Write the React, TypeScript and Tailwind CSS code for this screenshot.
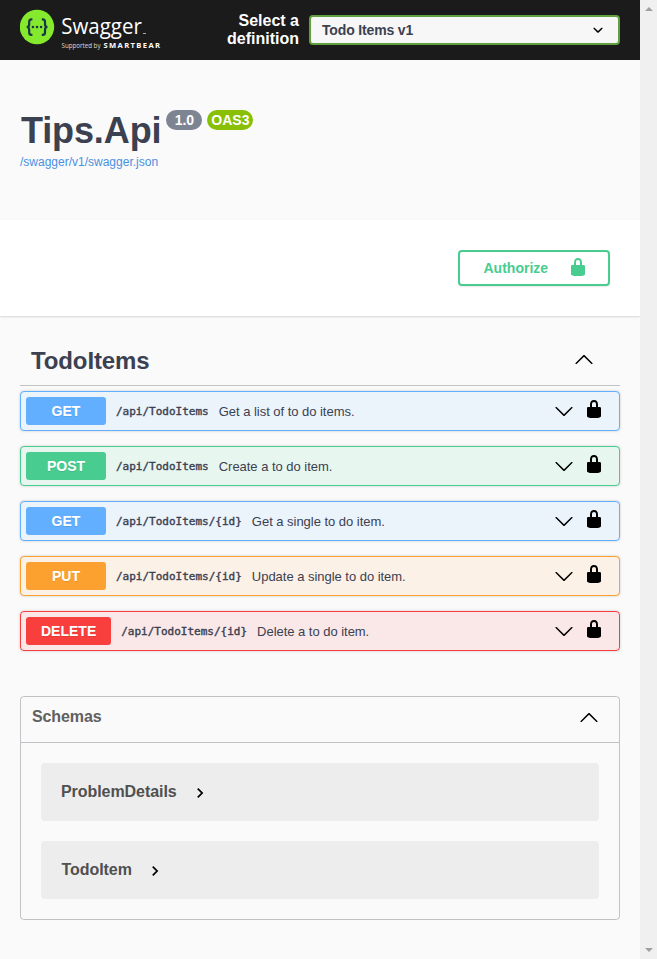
import React from "react";

const LOCK =
  "M15.8 8H14V5.6C14 2.703 12.665 1 10 1 7.334 1 6 2.703 6 5.6V8H4c-.553 0-1 .646-1 1.199V17c0 .549.428 1.139.951 1.307l1.197.387C5.672 18.861 6.55 19 7.1 19h5.8c.549 0 1.428-.139 1.951-.307l1.196-.387c.524-.167.953-.757.953-1.306V9.199C17 8.646 16.352 8 15.8 8zM12 8H8V5.199C8 3.754 8.797 3 10 3c1.203 0 2 .754 2 2.199V8z";
const DOWN =
  "M17.418 6.109c.272-.268.709-.268.979 0s.271.701 0 .969l-7.908 7.83c-.27.268-.707.268-.979 0l-7.908-7.83c-.27-.268-.27-.701 0-.969.271-.268.709-.268.979 0L10 13.25l7.418-7.141z";
const UP =
  "M17.418 14.908c.272.268.709.268.979 0s.271-.701 0-.969l-7.908-7.83c-.27-.268-.707-.268-.979 0l-7.908 7.83c-.27.268-.27.701 0 .969.271.268.709.268.979 0L10 7.767l7.418 7.141z";
const SELECT =
  "M13.418 7.859c.271-.268.709-.268.978 0 .27.268.272.701 0 .969l-3.908 3.83c-.27.268-.707.268-.979 0l-3.908-3.83c-.27-.267-.27-.701 0-.969.271-.268.709-.268.978 0L10 11l3.418-3.141z";

function Icon({ d, className = "" }: { d: string; className?: string }) {
  return (
    <svg viewBox="0 0 20 20" className={`h-5 w-5 shrink-0 fill-current ${className}`}>
      <path d={d} />
    </svg>
  );
}

function Logo() {
  return (
    <svg viewBox="0 0 150 60" className="h-[60px] w-[150px] shrink-0">
      <circle cx="17" cy="27" r="17.2" fill="#85ea2d" />
      <g fill="none" stroke="#173647" strokeWidth="2.2">
        <path d="M12.4 19.4h-.9c-1.7 0-2.3.9-2.3 2.4v2.4c0 1.7-.8 2.8-2.5 2.8 1.7 0 2.5 1.1 2.5 2.8v2.6c0 1.5.6 2.4 2.3 2.4h.9" />
        <path d="M21.8 19.4h.9c1.7 0 2.3.9 2.3 2.4v2.4c0 1.7.8 2.8 2.5 2.8-1.7 0-2.5 1.1-2.5 2.8v2.6c0 1.5-.6 2.4-2.3 2.4h-.9" />
      </g>
      <g fill="#173647">
        <circle cx="12.9" cy="27" r="1.3" />
        <circle cx="17" cy="27" r="1.3" />
        <circle cx="21.1" cy="27" r="1.3" />
      </g>
      <text x="41.3" y="34.3" textLength="80.5" lengthAdjust="spacingAndGlyphs" fill="#fff" fontSize="22.5" className="font-['Open_Sans',sans-serif]">
        Swagger
      </text>
      <path d="M123 33.5h3" stroke="#aaa" strokeWidth="1" />
      <text x="41.5" y="48" textLength="39" lengthAdjust="spacingAndGlyphs" fill="#ddd" fontSize="7" className="font-['Open_Sans',sans-serif]">
        Supported by
      </text>
      <text x="83.5" y="48" textLength="56.5" lengthAdjust="spacing" fill="#fff" fontSize="7.6" className="font-['Open_Sans',sans-serif] font-bold">
        SMARTBEAR
      </text>
    </svg>
  );
}

const operations = [
  { method: "GET", path: "/api/TodoItems", summary: "Get a list of to do items.", box: "border-[#61affe] bg-[#ebf3fb]", tag: "bg-[#61affe]" },
  { method: "POST", path: "/api/TodoItems", summary: "Create a to do item.", box: "border-[#49cc90] bg-[#e8f6f0]", tag: "bg-[#49cc90]" },
  { method: "GET", path: "/api/TodoItems/{id}", summary: "Get a single to do item.", box: "border-[#61affe] bg-[#ebf3fb]", tag: "bg-[#61affe]" },
  { method: "PUT", path: "/api/TodoItems/{id}", summary: "Update a single to do item.", box: "border-[#fca130] bg-[#fbf1e6]", tag: "bg-[#fca130]" },
  { method: "DELETE", path: "/api/TodoItems/{id}", summary: "Delete a to do item.", box: "border-[#f93e3e] bg-[#fae7e7]", tag: "bg-[#f93e3e]" },
];

function Model({ name, className }: { name: string; className: string }) {
  return (
    <div className={`flex h-[58px] items-center rounded bg-[#ededed] ${className}`}>
      <span className="text-base font-bold tracking-[-0.06px] text-[#505050]">{name}</span>
      <svg viewBox="0 0 24 24" className="mt-0.5 ml-[13px] h-5 w-5">
        <path d="M10 6L8.59 7.41 13.17 12l-4.58 4.59L10 18l6-6z" />
      </svg>
    </div>
  );
}

export default function App() {
  return (
    <div className="flex h-[959px] w-[657px] overflow-hidden bg-[#fafafa] font-['Liberation_Sans',Arial,sans-serif] text-[#3b4151]">
      <div className="w-[640px] shrink-0">
        <header className="flex h-[60px] items-center bg-[#1b1b1b] px-5">
          <Logo />
          <div className="ml-auto w-[90px] text-right text-base leading-[18px] font-bold text-white">Select a definition</div>
          <div className="ml-2.5 flex h-[30px] w-[311px] items-center rounded border-2 border-[#62a03f] bg-[#f7f7f7] pr-[10px] pl-[11px] text-sm font-bold">
            <span className="tracking-[-0.15px]">Todo Items v1</span>
            <Icon d={SELECT} className="ml-auto text-black" />
          </div>
        </header>

        <section className="h-40 px-5 pt-[50px]">
          <div className="flex items-start">
            <h2 className="pl-px text-[36px] leading-[42px] font-bold tracking-[-0.12px]">Tips.Api</h2>
            <span className="ml-[5px] flex h-5 w-9 items-center justify-center rounded-full bg-[#7d8492] text-sm font-bold text-white">1.0</span>
            <span className="ml-[5px] flex h-5 w-[46px] items-center justify-center rounded-full bg-[#89bf04] text-sm font-bold text-white">OAS3</span>
          </div>
          <a className="block text-xs leading-5 text-[#4990e2]">/swagger/v1/swagger.json</a>
        </section>

        <section className="flex h-24 justify-end bg-white pt-[30px] pr-[30px] shadow-[0_1px_2px_0_rgba(0,0,0,0.15)]">
          <button className="flex h-9 w-[152px] items-center rounded border-2 border-[#49cc90] pl-[23.5px] text-sm font-bold text-[#49cc90] shadow-[0_1px_2px_rgba(0,0,0,0.1)]">
            Authorize
            <Icon d={LOCK} className="-mt-0.5 ml-[19.5px]" />
          </button>
        </section>

        <main className="px-5 pt-5">
          <div className="flex h-[50px] items-center border-b border-[#3b4151]/30 pr-[26px] pl-[11px]">
            <h3 className="text-2xl font-bold tracking-[-0.12px]">TodoItems</h3>
            <Icon d={UP} className="mb-[3px] ml-auto text-black" />
          </div>
          <div className="mt-[5px] flex flex-col gap-[15px]">
            {operations.map((op, i) => (
              <div key={i} className={`flex h-10 items-center rounded border pr-[15px] pl-[5px] shadow-[0_0_3px_rgba(0,0,0,0.19)] ${op.box}`}>
                <span className={`flex h-7 min-w-20 items-center justify-center rounded-[3px] px-[15px] text-sm font-bold text-white [text-shadow:0_1px_0_rgba(0,0,0,0.1)] ${op.tag}`}>{op.method}</span>
                <code className="mt-0.5 ml-2.5 font-['DejaVu_Sans_Mono',monospace] text-[11px] font-normal [-webkit-text-stroke:0.4px]">{op.path}</code>
                <span className="mt-px ml-2.5 text-[13px] tracking-[-0.03px]">{op.summary}</span>
                <Icon d={DOWN} className="ml-auto text-black" />
                <Icon d={LOCK} className="mb-1 ml-2.5 text-black" />
              </div>
            ))}
          </div>

          <section className="mt-[45px] h-56 rounded border border-[#3b4151]/30">
            <div className="flex h-[46px] items-center border-b border-[#3b4151]/30 pr-5 pl-[11px]">
              <h4 className="pb-[5px] text-base font-bold tracking-[-0.1px] text-[#606060]">Schemas</h4>
              <Icon d={UP} className="mb-[5px] ml-auto text-black" />
            </div>
            <div className="flex flex-col gap-5 px-5 pt-5">
              <Model name="ProblemDetails" className="pl-5" />
              <Model name="TodoItem" className="pl-[20.5px]" />
            </div>
          </section>
        </main>
      </div>

      <div className="flex w-[17px] flex-col items-center justify-between bg-[#f0f0f0] pt-[7px] pb-[7px]">
        <svg viewBox="0 0 8 4" className="h-1 w-2"><path d="M4 0l4 4H0z" fill="#a0a0a0" /></svg>
        <svg viewBox="0 0 8 4" className="h-1 w-2"><path d="M0 0h8L4 4z" fill="#a0a0a0" /></svg>
      </div>
    </div>
  );
}
